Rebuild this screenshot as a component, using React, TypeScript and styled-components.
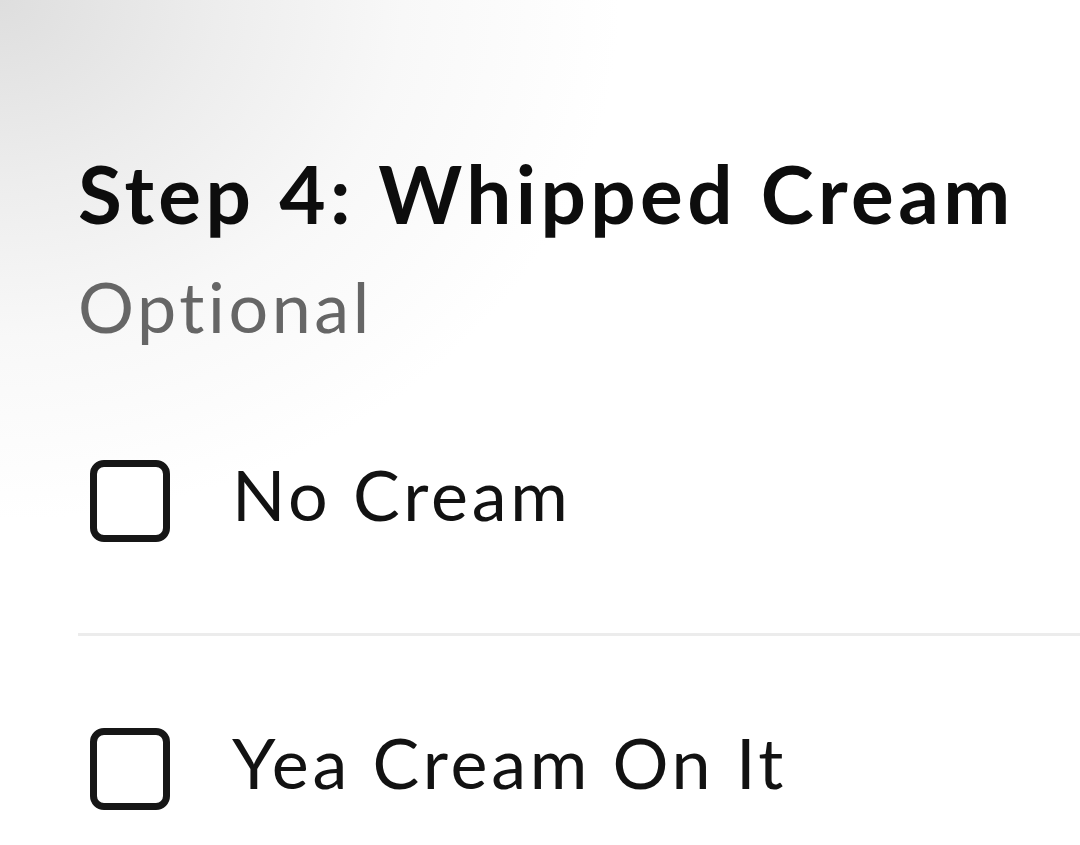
import styled, { createGlobalStyle } from 'styled-components';

const GlobalStyle = createGlobalStyle`
  html, body {
    margin: 0;
    padding: 0;
    background: #ffffff;
  }
  body {
    font-family: Lato, "Noto Sans", "Liberation Sans", sans-serif;
    font-variant-ligatures: none;
    -webkit-font-smoothing: antialiased;
  }
`;

const Page = styled.div`
  width: 1080px;
  height: 845px;
  overflow: hidden;
  box-sizing: border-box;
  padding: 153px 0 0 78px;
  background: radial-gradient(
    ellipse 620px 520px at 0 0,
    #dedede 0%,
    #ededed 35%,
    #f8f8f8 65%,
    #ffffff 100%
  );
`;

const Header = styled.div`
  display: flex;
  flex-direction: column;
  gap: 38px;
  margin-bottom: 27px;
`;

const Title = styled.h2`
  margin: 0;
  font-size: 80px;
  line-height: 1;
  font-weight: 700;
  color: #0d0d0d;
  letter-spacing: 4.4px;
  white-space: nowrap;
`;

const Subtitle = styled.div`
  font-size: 70px;
  line-height: 1;
  font-weight: 400;
  color: #666666;
  letter-spacing: 3.6px;
`;

const OptionList = styled.div`
  display: flex;
  flex-direction: column;
`;

const Option = styled.label`
  display: flex;
  align-items: center;
  gap: 62px;
  padding: 78px 0 91px 12px;

  & + & {
    border-top: 3px solid #ececec;
  }
`;

const Checkbox = styled.span<{ checked?: boolean }>`
  flex: none;
  box-sizing: border-box;
  width: 80px;
  height: 82px;
  margin-top: 14px;
  border: 7px solid #161616;
  border-radius: 14px;
  background: ${({ checked }) => (checked ? '#161616' : '#ffffff')};
`;

const OptionText = styled.span`
  font-size: 70px;
  line-height: 1;
  font-weight: 400;
  color: #121212;
  letter-spacing: 3.7px;
  white-space: nowrap;
`;

const options = ['No Cream', 'Yea Cream On It'];

const App = () => {
  return (
    <>
      <GlobalStyle />
      <Page>
        <Header>
          <Title>Step 4: Whipped Cream</Title>
          <Subtitle>Optional</Subtitle>
        </Header>
        <OptionList>
          {options.map((name) => (
            <Option key={name}>
              <Checkbox />
              <OptionText>{name}</OptionText>
            </Option>
          ))}
        </OptionList>
      </Page>
    </>
  );
};

export default App;
